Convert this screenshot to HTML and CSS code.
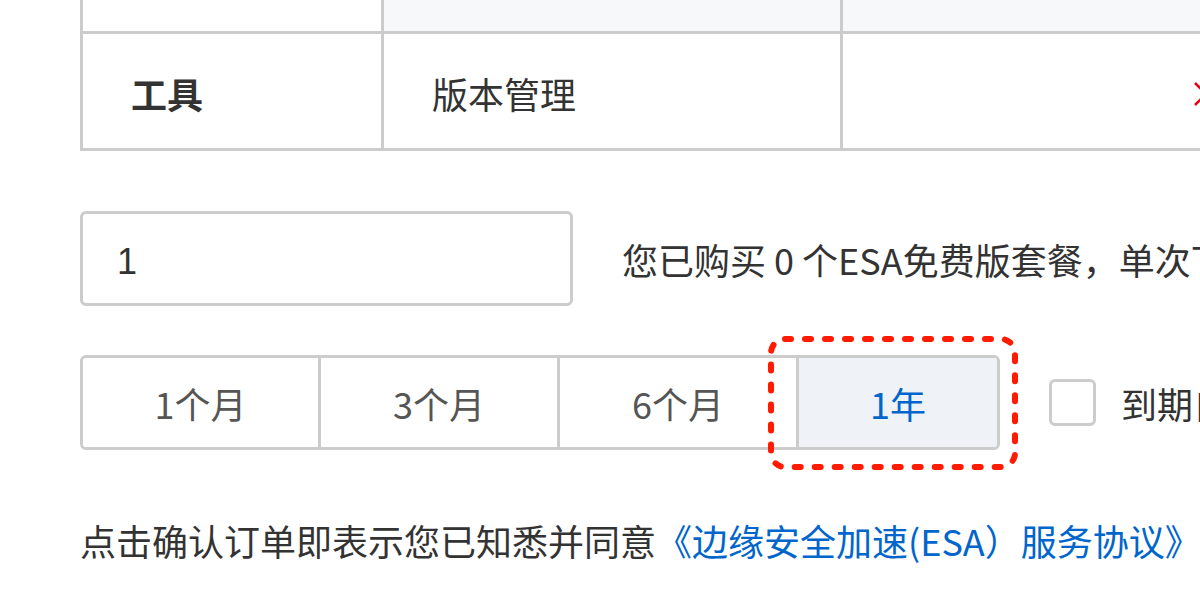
FILE: index.html
```html
<!DOCTYPE html>
<html lang="zh-CN">
<head>
  <meta charset="UTF-8">
  <title>ESA 免费版 - 确认订单</title>
  <link rel="stylesheet" href="styles.css">
</head>
<body>
  <div class="page">

    <!-- 功能对比表 -->
    <table class="spec-table">
      <tr class="head-row">
        <td class="col-name"></td>
        <td class="col-item shade"></td>
        <td class="col-flag shade"></td>
      </tr>
      <tr class="body-row">
        <th class="col-name">工具</th>
        <td class="col-item">版本管理</td>
        <td class="col-flag">
          <svg class="icon-no" width="24" height="24" viewBox="0 0 24 24">
            <path d="M1 1 L23 23 M23 1 L1 23" />
          </svg>
        </td>
      </tr>
    </table>

    <!-- 购买数量 -->
    <div class="qty-row">
      <input class="qty-input" type="text" value="1">
      <span class="hint">您已购买 0 个ESA免费版套餐，单次下单最多可购买 1 个</span>
    </div>

    <!-- 购买时长 -->
    <div class="term-row">
      <div class="term-wrap">
        <div class="term-group">
          <button type="button" class="term term-1">1个月</button>
          <button type="button" class="term term-2">3个月</button>
          <button type="button" class="term term-3">6个月</button>
          <button type="button" class="term term-4 active">1年</button>
        </div>
        <svg class="focus-ring" width="250" height="134" viewBox="0 0 250 134">
          <rect x="3" y="3" width="244" height="128" rx="14" ry="14" />
        </svg>
      </div>
      <label class="renew">
        <span class="check"></span>
        <span>到期自动续费</span>
      </label>
    </div>

    <p class="agree">点击确认订单即表示您已知悉并同意<a href="#">《边缘安全加速(ESA）服务协议》</a></p>
  </div>
</body>
</html>
```

FILE: styles.css
```css
body {
  margin: 0;
  overflow: hidden;
  background-color: white;
  font-family: "Noto Sans CJK SC", "Noto Sans", sans-serif;
  font-size: 36px;
  color: #333;
}

.page {
  padding-left: 80px;
  width: 1700px;
}

/* 表格 */
.spec-table {
  border-collapse: separate;
  border-spacing: 0;
  table-layout: fixed;
  width: 1491px;
  border-left: 3px solid #ccc;
}

.spec-table td,
.spec-table th {
  box-sizing: border-box;
  border-right: 3px solid #ccc;
  border-bottom: 3px solid #ccc;
  padding: 0 0 0 48px;
  text-align: left;
  font-weight: normal;
}

.spec-table .col-name {
  width: 301px;
}

.spec-table .col-item {
  width: 459px;
}

.spec-table .col-flag {
  width: 728px;
  padding: 0;
  text-align: center;
}

.head-row td {
  height: 34px;
}

.shade {
  background-color: #f7f8fa;
}

.body-row td,
.body-row th {
  height: 117px;
  padding-top: 4px;
}

.body-row th {
  font-weight: bold;
}

.icon-no {
  display: inline-block;
  vertical-align: middle;
  margin-top: -6px;
}

.icon-no path {
  stroke: #e60012;
  stroke-width: 2.5;
  fill: none;
}

/* 数量 */
.qty-row {
  display: flex;
  align-items: center;
  gap: 49px;
  margin-top: 60px;
}

.qty-input {
  box-sizing: border-box;
  width: 493px;
  height: 95px;
  padding: 6px 0 0 34px;
  border: 3px solid #ccc;
  border-radius: 6px;
  font-family: "Liberation Sans", Arial, sans-serif;
  font-size: 36px;
  color: #333;
  outline: none;
}

.hint {
  white-space: nowrap;
}

/* 时长 */
.term-row {
  display: flex;
  align-items: center;
  margin-top: 49px;
}

.term-wrap {
  position: relative;
}

.term-group {
  display: flex;
  box-sizing: border-box;
  width: 920px;
  height: 95px;
  border: 3px solid #ccc;
  border-radius: 6px;
  overflow: hidden;
}

.term {
  box-sizing: border-box;
  height: 100%;
  border: none;
  border-right: 3px solid #ccc;
  background-color: white;
  font-family: "Noto Sans CJK SC", "Noto Sans", sans-serif;
  font-size: 36px;
  color: #555;
  padding: 0;
  cursor: pointer;
}

.term-1 { width: 238px; }
.term-2 { width: 239px; }
.term-3 { width: 239px; }

.term-4 {
  flex: 1;
  border-right: none;
}

.term.active {
  background-color: #eff2f7;
  color: #0066cc;
}

/* 标注框 */
.focus-ring {
  position: absolute;
  left: 688px;
  top: -19px;
}

.focus-ring rect {
  fill: none;
  stroke: #ff1a00;
  stroke-width: 6;
  stroke-dasharray: 6 14;
  stroke-linecap: round;
}

.renew {
  display: flex;
  align-items: center;
  gap: 25px;
  margin-left: 49px;
  white-space: nowrap;
}

.check {
  box-sizing: border-box;
  width: 47px;
  height: 47px;
  border: 3px solid #ccc;
  border-radius: 6px;
}

.agree {
  margin: 63px 0 0;
  line-height: 54px;
  white-space: nowrap;
}

.agree a {
  color: #0066cc;
  text-decoration: none;
}
```
